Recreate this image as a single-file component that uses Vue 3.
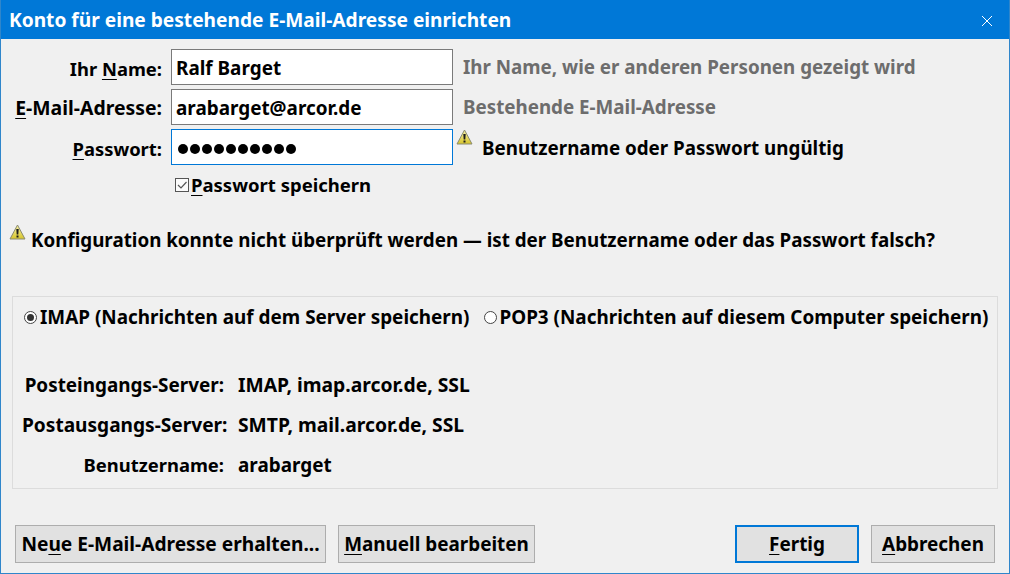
<script setup>
const infoRows = [
  { label: 'Posteingangs-Server:', value: 'IMAP, imap.arcor.de, SSL', lc: '', vc: 'wide' },
  { label: 'Postausgangs-Server:', value: 'SMTP, mail.arcor.de, SSL', lc: 'wide-l', vc: 'wide' },
  { label: 'Benutzername:', value: 'arabarget', lc: 'tight', vc: '' },
]
</script>

<template>
  <div class="window">
    <header class="titlebar">
      <span class="title">Konto für eine bestehende E-Mail-Adresse einrichten</span>
      <svg class="close" width="12" height="12" viewBox="0 0 12 12"><path d="M1 1l10 10M11 1L1 11" stroke="#fff" stroke-width="1" fill="none" /></svg>
    </header>
    <main class="body">
      <section class="form">
        <label class="lbl tight">Ihr <u>N</u>ame:</label>
        <div class="input">Ralf Barget</div>
        <span class="hint">Ihr Name, wie er anderen Personen gezeigt wird</span>

        <label class="lbl wide-m"><u>E</u>-Mail-Adresse:</label>
        <div class="input">arabarget@arcor.de</div>
        <span class="hint">Bestehende E-Mail-Adresse</span>

        <label class="lbl tight"><u>P</u>asswort:</label>
        <div class="input focus"><span class="dots"><i v-for="n in 10" :key="n"></i></span></div>
        <span class="pw-error">
          <svg class="warn" width="17" height="17" viewBox="0 0 17 17">
            <defs><linearGradient id="w1" x1="0" y1="0" x2="0" y2="1"><stop offset="0" stop-color="#f8f2a8" /><stop offset="1" stop-color="#d6c42a" /></linearGradient></defs>
            <path d="M8.5 1L16 15H1z" fill="url(#w1)" stroke="#8a8a70" stroke-linejoin="round" />
            <path d="M7.3 5h2.4l-.4 5.6H7.7zM7.5 11.6h2v2h-2z" fill="#1c1c1c" />
          </svg>
          <span>Benutzername oder Passwort ungültig</span>
        </span>

        <span></span>
        <label class="check">
          <svg width="14" height="14" viewBox="0 0 14 14"><rect x=".5" y=".5" width="13" height="13" fill="#fbfbfb" stroke="#555" /><path d="M3 7l3 3 5.5-6" fill="none" stroke="#555" stroke-width="1.2" /></svg>
          <span><u>P</u>asswort speichern</span>
        </label>
      </section>

      <p class="status">
        <svg class="warn" width="17" height="17" viewBox="0 0 17 17">
          <defs><linearGradient id="w2" x1="0" y1="0" x2="0" y2="1"><stop offset="0" stop-color="#f8f2a8" /><stop offset="1" stop-color="#d6c42a" /></linearGradient></defs>
          <path d="M8.5 1L16 15H1z" fill="url(#w2)" stroke="#8a8a70" stroke-linejoin="round" />
          <path d="M7.3 5h2.4l-.4 5.6H7.7zM7.5 11.6h2v2h-2z" fill="#1c1c1c" />
        </svg>
        <span>Konfiguration konnte nicht überprüft werden — ist der Benutzername oder das Passwort falsch?</span>
      </p>

      <section class="group">
        <div class="radios">
          <label class="radio"><span class="dot on"></span>IMAP (Nachrichten auf dem Server speichern)</label>
          <label class="radio"><span class="dot"></span>POP3 (Nachrichten auf diesem Computer speichern)</label>
        </div>
        <div class="info">
          <template v-for="r in infoRows" :key="r.label">
            <span class="info-l" :class="r.lc">{{ r.label }}</span>
            <span class="info-v" :class="r.vc">{{ r.value }}</span>
          </template>
        </div>
      </section>

      <footer class="actions">
        <button class="btn b1">Ne<u>u</u>e E-Mail-Adresse erhalten...</button>
        <button class="btn b2"><u>M</u>anuell bearbeiten</button>
        <span class="spacer"></span>
        <button class="btn primary"><u>F</u>ertig</button>
        <button class="btn b4"><u>A</u>bbrechen</button>
      </footer>
    </main>
  </div>
</template>

<style scoped>
.window {
  width: 1010px;
  height: 574px;
  box-sizing: border-box;
  display: flex;
  flex-direction: column;
  border: 1px solid #2f86cb;
  border-top: 0;
  background: #f0f0f0;
  font-family: "Noto Sans", "Open Sans", sans-serif;
  font-weight: 700;
  font-size: 18.9px;
  color: #000;
  overflow: hidden;
}
u { text-underline-offset: 3px; text-decoration-thickness: 1px; }
.titlebar {
  height: 39px;
  flex: none;
  background: #0078d7;
  color: #fff;
  font-size: 19.15px;
  display: flex;
  align-items: center;
  justify-content: space-between;
  padding: 1px 16px 0 8px;
  box-sizing: border-box;
}
.close { margin-top: 2px; }
.body { flex: 1; display: flex; flex-direction: column; padding: 10px 11px 11px; }
.form {
  display: grid;
  grid-template-columns: 150px 282px 1fr;
  column-gap: 9px;
  row-gap: 4px;
  align-items: center;
}
.lbl { text-align: right; padding-top: 3px; white-space: nowrap; }
.tight { font-size: 18.4px; }
.wide-m { font-size: 19.4px; padding-top: 1px; }
.wide-l { font-size: 19.1px; }
.wide { font-size: 19.3px; }
.input {
  height: 36px;
  box-sizing: border-box;
  border: 1px solid #7a7a7a;
  background: #fff;
  padding: 2px 4px 0;
  display: flex;
  align-items: center;
}
.focus { border-color: #0078d7; }
.dots { display: flex; gap: 2px; padding: 2px 0 0 2px; }
.dots i { width: 10px; height: 10px; border-radius: 50%; background: #000; display: block; }
.hint { color: #6d6d6d; padding-left: 1px; margin-top: -1px; font-size: 18.8px; }
.pw-error { display: flex; align-items: center; padding-top: 1px; font-size: 18.8px; }
.pw-error span { margin-left: 9px; }
.pw-error .warn { margin-left: -6px; margin-top: -20px; }
.check { grid-column: 2 / 4; display: flex; align-items: center; gap: 2px; padding: 3px 0 0 4px; font-size: 18.5px; }
.status { margin: 28px 0 0 -3px; display: flex; align-items: center; height: 30px; font-size: 18.8px; }
.status .warn { margin-top: -16px; margin-right: 5px; }
.group {
  margin-top: 41px;
  height: 193px;
  box-sizing: border-box;
  border: 1px solid #dcdcdc;
  display: flex;
  flex-direction: column;
  padding: 6px 8px 0 9px;
}
.radios { display: flex; gap: 13px; height: 28px; align-items: center; }
.radio { display: flex; align-items: center; white-space: nowrap; }
.dot {
  width: 13px; height: 13px; box-sizing: border-box; border: 1px solid #444; border-radius: 50%;
  background: #fff; margin: 0 3px 0 2px; display: grid; place-items: center; flex: none;
}
.radio + .radio .dot { margin-right: 2px; }
.dot.on::after { content: ""; width: 7px; height: 7px; border-radius: 50%; background: #333; }
.info {
  margin-top: 40px;
  display: grid;
  grid-template-columns: 202px 1fr;
  column-gap: 14px;
  row-gap: 12px;
  line-height: 28px;
}
.info-l { text-align: right; white-space: nowrap; }
.actions { margin-top: 36px; display: flex; gap: 12px; }
.spacer { flex: 1; }
.btn {
  height: 38px;
  box-sizing: border-box;
  border: 1px solid #adadad;
  background: #e1e1e1;
  font: inherit;
  color: #000;
  padding: 0;
}
.b1 { width: 311px; margin-left: 3px; font-size: 19.15px; }
.b2 { width: 197px; }
.primary { width: 124px; border: 2px solid #0078d7; }
.b4 { width: 124px; margin-right: 3px; }
</style>
